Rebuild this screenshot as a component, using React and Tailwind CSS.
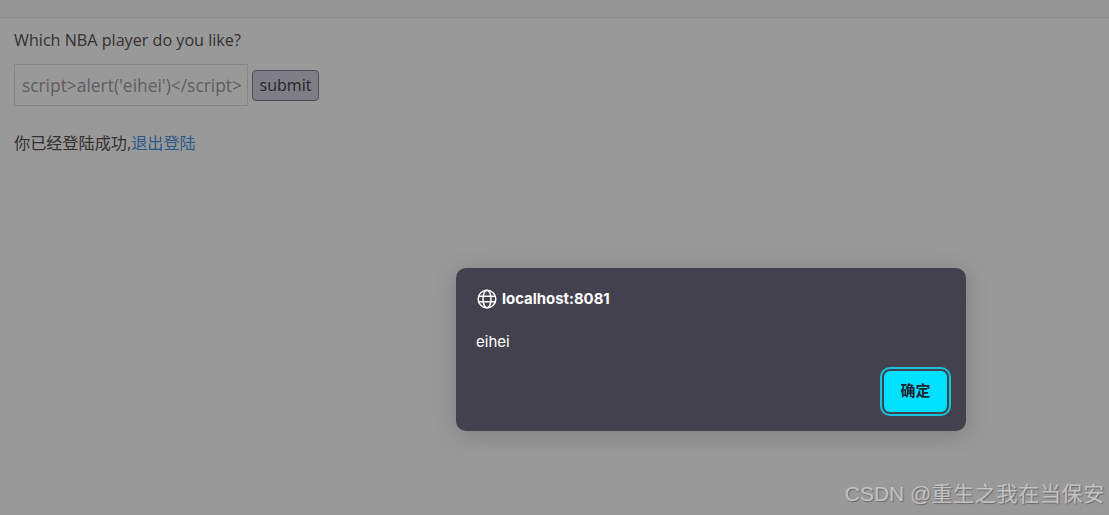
import React from 'react';

const GlobeIcon = () => (
    <svg width="20" height="20" viewBox="0 0 20 20" fill="none" stroke="#ffffff" strokeWidth="1.5" className="shrink-0">
        <circle cx="10" cy="10" r="8.8" />
        <ellipse cx="10" cy="10" rx="4" ry="8.8" />
        <path d="M1.8 7.2h16.4M1.8 12.8h16.4" />
    </svg>
);

const App = () => {
    return (
        <div className="relative w-[1109px] h-[515px] overflow-hidden bg-[#9a999a] font-['Open_Sans','Noto_Sans_CJK_SC',sans-serif] text-[16.15px] text-[#2f2b2b]">
            <div className="h-[18px] bg-[#959495] border-b border-[#8c8b8c]" />

            <div className="pl-[14px]">
                <p className="mt-[10px] h-[24px] leading-[24px] text-[#33302f]">Which NBA player do you like?</p>

                <form className="mt-[12px] flex items-center" onSubmit={(e) => e.preventDefault()}>
                    <div className="w-[234px] h-[42px] border border-[#868586] pl-[6px] pr-[5px] flex items-center">
                        <div className="w-full overflow-hidden flex justify-end whitespace-nowrap text-[#5f5d5e] text-[17.4px] leading-[24px]">
                            &lt;script&gt;alert('eihei')&lt;/script&gt;
                        </div>
                    </div>
                    <button className="ml-[4px] w-[67px] h-[31px] rounded-[4px] border border-[#4e4c55] bg-[#7f7d85] text-[16px] text-[#26242a] leading-none">
                        submit
                    </button>
                </form>

                <p className="mt-[25px] h-[24px] leading-[24px] text-[#33302f]">
                    你已经登陆成功,<a className="text-[#2a5a85]">退出登陆</a>
                </p>
            </div>

            {/* alert dialog */}
            <div className="absolute left-[456px] top-[268px] w-[510px] h-[163px] rounded-[10px] bg-[#44414e] shadow-[0_4px_24px_rgba(0,0,0,0.18)] pt-[21px] pl-[20px] pr-[19px] font-['Inter','Noto_Sans_CJK_SC',sans-serif] text-white">
                <div className="flex items-center gap-[5px] h-[20px] pl-[1px]">
                    <GlobeIcon />
                    <span className="text-[14.9px] font-bold leading-[20px]">localhost:8081</span>
                </div>
                <p className="mt-[23px] text-[15px] leading-[20px]">eihei</p>
                <div className="mt-[19px] flex justify-end">
                    <button className="w-[63px] h-[41px] rounded-[6px] bg-[#00e0ff] outline-2 outline-[#17c3dc] outline-offset-2 text-[15px] font-bold text-[#1f2430]">
                        确定
                    </button>
                </div>
            </div>

            <div className="absolute right-[4px] bottom-[7px] font-['Liberation_Sans','Noto_Sans_CJK_SC',sans-serif] text-[21px] leading-[28px] text-[#c4c3c4] [text-shadow:1px_1px_1px_#6a696a] whitespace-nowrap">
                CSDN @<span className="tracking-[0.7px]">重生之我在当保安</span>
            </div>
        </div>
    );
};

export default App;
